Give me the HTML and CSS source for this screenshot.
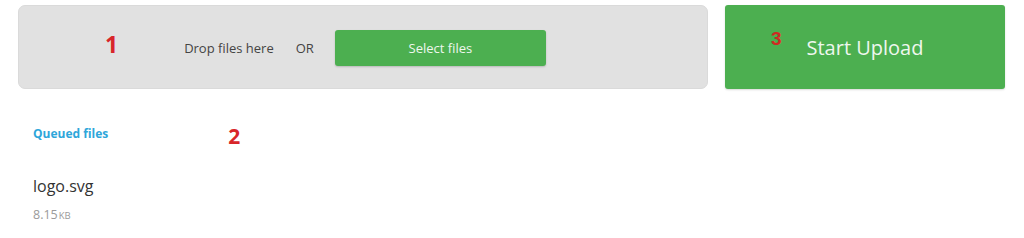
FILE: index.html
```html
<!DOCTYPE html>
<html>
<head>
<meta charset="utf-8">
<link rel="stylesheet" href="styles.css">
</head>
<body>
<div class="page">
  <div class="top">
    <div class="dropzone">
      <span class="anno anno-1">1</span>
      <span class="drop-text">Drop files here</span>
      <span class="or">OR</span>
      <button class="select-btn">Select files</button>
    </div>
    <button class="start-btn"><span class="anno anno-3">3</span>Start Upload</button>
  </div>
  <div class="queue">
    <div class="queue-head">
      <span class="queue-title">Queued files</span>
      <span class="anno-2">2</span>
    </div>
    <div class="file">
      <div class="file-name">logo.svg</div>
      <div class="file-size">8.15<span class="unit">KB</span></div>
    </div>
  </div>
</div>
</body>
</html>
```
FILE: styles.css
```css
* { box-sizing: border-box; }
body {
  margin: 0;
  background: #fff;
  font-family: "Open Sans", "Noto Sans", sans-serif;
  color: #444;
}
.page {
  padding: 5px 19px 0 18px;
}
.top {
  display: flex;
  gap: 17px;
}
.dropzone {
  position: relative;
  width: 690px;
  height: 84px;
  background: #e1e1e1;
  border: 1px solid #dadada;
  border-radius: 7px;
  display: flex;
  align-items: center;
  justify-content: center;
  padding-top: 2px;
  padding-left: 4px;
}
.drop-text {
  font-size: 13px;
  color: #444;
  margin-right: 22px;
}
.or {
  font-size: 13px;
  color: #444;
  margin-right: 21px;
}
.select-btn {
  width: 211px;
  height: 36px;
  background: #4caf50;
  border: none;
  border-radius: 3px;
  color: #eef7ee;
  font-family: "Open Sans", "Noto Sans", sans-serif;
  font-size: 13px;
  box-shadow: 0 1px 2px rgba(0,0,0,0.18);
  padding: 0;
}
.start-btn {
  position: relative;
  width: 280px;
  height: 84px;
  background: #4caf50;
  border: none;
  border-radius: 3px;
  color: #eef7ee;
  font-family: "Open Sans", "Noto Sans", sans-serif;
  font-size: 20px;
  box-shadow: 0 1px 2px rgba(0,0,0,0.15);
  padding: 0;
}
.anno {
  position: absolute;
  color: #d8262a;
  font-weight: bold;
}
.anno-1 {
  left: 86px;
  top: 22px;
  font-size: 23px;
  font-family: "Open Sans", "Noto Sans", sans-serif;
}
.anno-3 {
  left: 46px;
  top: 23px;
  font-size: 19px;
  font-family: "Liberation Sans", Arial, sans-serif;
  color: #d02a22;
}
.queue {
  margin-left: 15px;
  margin-top: 37px;
}
.queue-head {
  display: flex;
  align-items: center;
  gap: 120px;
  height: 16px;
}
.queue-title {
  font-size: 12px;
  font-weight: bold;
  color: #2ea6da;
  line-height: 16px;
}
.anno-2 {
  color: #d8262a;
  font-weight: bold;
  font-size: 21px;
  line-height: 16px;
  position: relative;
  top: 2px;
}
.file {
  margin-top: 33px;
}
.file-name {
  font-size: 16px;
  line-height: 22px;
  color: #333;
}
.file-size {
  margin-top: 10px;
  font-size: 12.5px;
  line-height: 16px;
  color: #9a9a9a;
}
.unit {
  font-size: 9.5px;
  margin-left: 1px;
}
```
